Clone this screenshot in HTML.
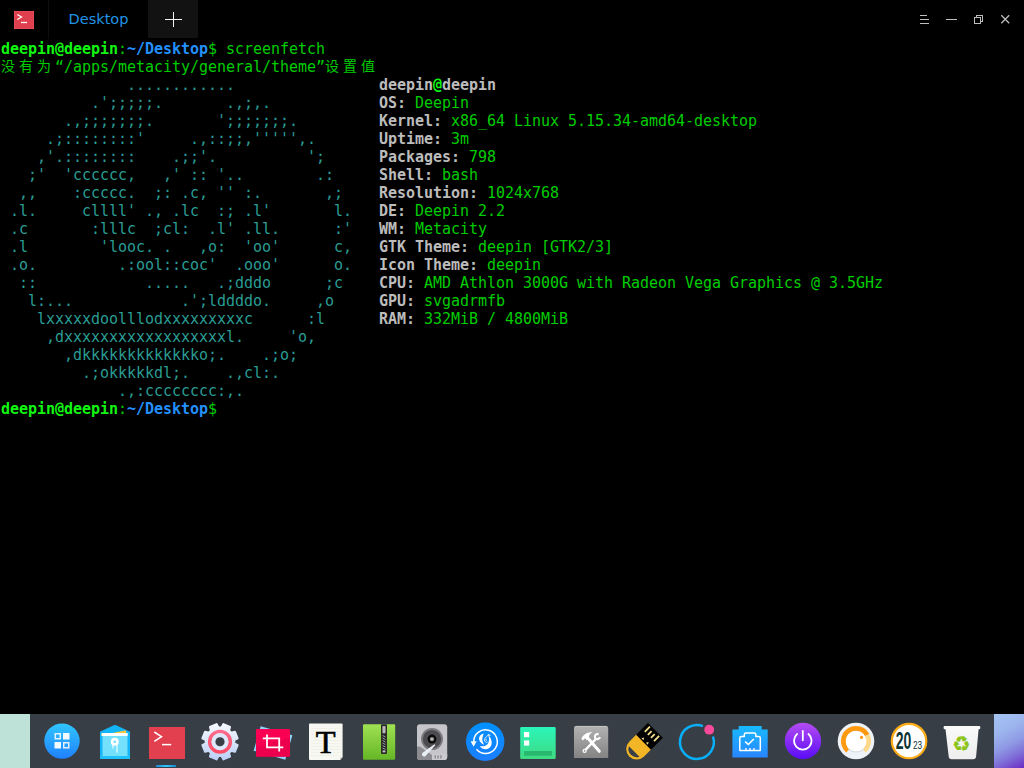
<!DOCTYPE html>
<html lang="zh-CN"><head><meta charset="utf-8"><title>Desktop - Deepin Terminal</title>
<style>
html,body{margin:0;padding:0;background:#000;}
body{width:1024px;height:768px;position:relative;overflow:hidden;font-family:"Liberation Sans","Noto Sans CJK SC",sans-serif;}
#titlebar{position:absolute;left:0;top:0;width:1024px;height:39px;background:#000;}
#tab{position:absolute;left:48px;top:0;width:99px;height:39px;color:#2094e6;font-family:"DejaVu Sans","Liberation Sans",sans-serif;font-size:14.500px;line-height:39px;text-align:center;border-left:1px solid #0e0e0e;}
#plus{position:absolute;left:148px;top:0;width:50px;height:38px;background:#121212;}
#term{position:absolute;left:1px;top:40px;width:1022px;height:675px;color:#00cd00;font-family:"DejaVu Sans Mono", "Liberation Mono", "Noto Sans CJK SC", monospace;font-size:15px;line-height:18px;letter-spacing:-0.03px;}
.ln{height:18px;white-space:pre;overflow:visible;}
.ln b{font-weight:bold;}
.ln i{font-style:normal;display:inline-block;width:18px;height:18px;vertical-align:top;text-align:center;letter-spacing:0;font-family:"Noto Sans CJK SC","WenQuanYi Zen Hei",sans-serif;font-size:14px;line-height:18px;position:relative;left:-2px;top:-2px;}
.g{color:#12f612;}
.b{color:#2490fc;}
.c{color:#2a9d94;}
.w{color:#bcbcbc;}
#dockwrap{position:absolute;left:0;top:714px;width:1024px;height:54px;}
#wl{position:absolute;left:0;top:0;width:30px;height:54px;background:#bfe2d8;}
#wr{position:absolute;left:994px;top:0;width:30px;height:54px;background:linear-gradient(152deg,#a4c4f2 0%,#9db6ee 30%,#8f9ae4 55%,#8070d8 75%,#6a2ac4 100%);}
#dock{position:absolute;left:30px;top:0;width:964px;height:54px;background:#383e45;}
</style></head><body>
<div id="titlebar">
<svg style="position:absolute;left:14px;top:11px" width="20" height="18" viewBox="0 0 20 18"><rect x="0" y="0" width="20" height="18" fill="#ef4c5c"/><rect x="0.500" y="0.500" width="19" height="17" fill="#df404e"/><path d="M3.300 3.400 L7.600 6 L3.300 8.600" fill="none" stroke="#fff" stroke-width="1.200"/><path d="M7 11.500 H13" stroke="#fff" stroke-width="1.300"/></svg>
<div id="tab">Desktop</div>
<div id="plus"><svg width="50" height="38" viewBox="0 0 50 38" shape-rendering="crispEdges"><path d="M17 19.500 H34 M25.500 12 V27" stroke="#f4f4f4" stroke-width="1" fill="none"/></svg></div>
<svg style="position:absolute;left:910px;top:8px" width="110" height="24" viewBox="0 0 110 24" fill="none" stroke="#bdbdbd" stroke-width="1">
<g shape-rendering="crispEdges"><path d="M10 7.500 H17 M10 11.500 H19 M10 15.500 H19"/>
<path d="M36 11.500 H47"/>
<path d="M64.500 9.500 H70.500 V15.500 H64.500 Z M66.500 9 V7.500 H72.500 V13.500 H71"/></g>
<path d="M91.300 7.300 L99.200 15.200 M99.200 7.300 L91.300 15.200" stroke-width="1.300"/>
</svg>
</div>
<div id="term">
<div class="ln"><b class="g">deepin@deepin</b>:<b class="b">~/Desktop</b>$ screenfetch</div>
<div class="ln"><i>没</i><i>有</i><i>为</i>“/apps/metacity/general/theme”<i>设</i><i>置</i><i>值</i></div>
<div class="ln"><span class="c">              ............                </span><b class="w">deepin</b><b class="g">@</b><b class="w">deepin</b></div>
<div class="ln"><span class="c">          .';;;;;.       .,;,.            </span><b class="w">OS:</b> Deepin</div>
<div class="ln"><span class="c">       .,;;;;;;;.       ';;;;;;;.         </span><b class="w">Kernel:</b> x86_64 Linux 5.15.34-amd64-desktop</div>
<div class="ln"><span class="c">     .;::::::::'     .,::;;,''''',.       </span><b class="w">Uptime:</b> 3m</div>
<div class="ln"><span class="c">    ,'.::::::::    .;;'.          ';      </span><b class="w">Packages:</b> 798</div>
<div class="ln"><span class="c">   ;'  'cccccc,   ,' :: '..        .:     </span><b class="w">Shell:</b> bash</div>
<div class="ln"><span class="c">  ,,    :ccccc.  ;: .c, '' :.       ,;    </span><b class="w">Resolution:</b> 1024x768</div>
<div class="ln"><span class="c"> .l.     cllll' ., .lc  :; .l'       l.   </span><b class="w">DE:</b> Deepin 2.2</div>
<div class="ln"><span class="c"> .c       :lllc  ;cl:  .l' .ll.      :'   </span><b class="w">WM:</b> Metacity</div>
<div class="ln"><span class="c"> .l        'looc. .   ,o:  'oo'      c,   </span><b class="w">GTK Theme:</b> deepin [GTK2/3]</div>
<div class="ln"><span class="c"> .o.         .:ool::coc'  .ooo'      o.   </span><b class="w">Icon Theme:</b> deepin</div>
<div class="ln"><span class="c">  ::            .....   .;dddo      ;c    </span><b class="w">CPU:</b> AMD Athlon 3000G with Radeon Vega Graphics @ 3.5GHz</div>
<div class="ln"><span class="c">   l:...            .';lddddo.     ,o     </span><b class="w">GPU:</b> svgadrmfb</div>
<div class="ln"><span class="c">    lxxxxxdoolllodxxxxxxxxxc      :l      </span><b class="w">RAM:</b> 332MiB / 4800MiB</div>
<div class="ln"><span class="c">     ,dxxxxxxxxxxxxxxxxxxl.     'o,       </span></div>
<div class="ln"><span class="c">       ,dkkkkkkkkkkkkko;.    .;o;         </span></div>
<div class="ln"><span class="c">         .;okkkkkdl;.    .,cl:.           </span></div>
<div class="ln"><span class="c">             .,:cccccccc:,.               </span></div>
<div class="ln"><b class="g">deepin@deepin</b>:<b class="b">~/Desktop</b>$</div>
</div>
<div id="dockwrap"><div id="wl"></div><div id="dock">
<svg id="dk" style="position:absolute;left:0;top:0" width="964" height="54" viewBox="30 714 964 54">
<defs>
<linearGradient id="gLaunch" x1="0" y1="0" x2="0" y2="1"><stop offset="0" stop-color="#30c6ff"/><stop offset="1" stop-color="#2080ff"/></linearGradient>
<linearGradient id="gGear" x1="0" y1="0" x2="0" y2="1"><stop offset="0" stop-color="#f4f9ff"/><stop offset="1" stop-color="#bcd0f4"/></linearGradient>
<linearGradient id="gRing" x1="0" y1="0" x2="0" y2="1"><stop offset="0" stop-color="#ff6a8c"/><stop offset="1" stop-color="#ff4a64"/></linearGradient>
<linearGradient id="gZip" x1="0" y1="0" x2="0" y2="1"><stop offset="0" stop-color="#9fe152"/><stop offset="1" stop-color="#66b626"/></linearGradient>
<linearGradient id="gDesk" x1="0" y1="0" x2="0" y2="1"><stop offset="0" stop-color="#2af6ba"/><stop offset="1" stop-color="#3fda82"/></linearGradient>
<linearGradient id="gTool" x1="0" y1="0" x2="0" y2="1"><stop offset="0" stop-color="#b2b2b2"/><stop offset="1" stop-color="#848484"/></linearGradient>
<linearGradient id="gNet" x1="0" y1="0" x2="0" y2="1"><stop offset="0" stop-color="#18baff"/><stop offset="1" stop-color="#2886ff"/></linearGradient>
<linearGradient id="gPow" x1="0" y1="0" x2="0" y2="1"><stop offset="0" stop-color="#b44cf0"/><stop offset="1" stop-color="#5a0cf8"/></linearGradient>
<linearGradient id="gRec" x1="0" y1="0" x2="0" y2="1"><stop offset="0" stop-color="#0092ff"/><stop offset="1" stop-color="#1c7eff"/></linearGradient>
<linearGradient id="gTrash" x1="0" y1="0" x2="0" y2="1"><stop offset="0" stop-color="#fafafa"/><stop offset="1" stop-color="#eeeeee"/></linearGradient>
<linearGradient id="gInd" x1="0" y1="0" x2="1" y2="0"><stop offset="0" stop-color="#1c86d2"/><stop offset="0.500" stop-color="#2fc8ff"/><stop offset="1" stop-color="#1c86d2"/></linearGradient>
</defs>

<!-- launcher -->
<circle cx="62" cy="741.100" r="17.700" fill="url(#gLaunch)"/>
<rect x="55.250" y="733.750" width="5" height="5" fill="none" stroke="#fff" stroke-opacity="0.850" stroke-width="1.500"/>
<rect x="63" y="733" width="6.500" height="6.500" fill="#fff" fill-opacity="0.940"/>
<rect x="54.500" y="742" width="6.500" height="6.500" fill="#fff" fill-opacity="0.940"/>
<rect x="63.750" y="742.750" width="5" height="5" fill="none" stroke="#fff" stroke-opacity="0.850" stroke-width="1.500"/>

<!-- file manager -->
<path d="M100 731.700 L113.800 725.300 Q115 724.800 116.200 725.300 L130 731.700 V758.200 a0.800 0.800 0 0 1 -0.800 0.800 H100.800 a0.800 0.800 0 0 1 -0.800 -0.800 Z" fill="#14b4f8"/>
<rect x="100" y="755.500" width="30" height="3.500" rx="0.800" fill="#1fc2ff"/>
<path d="M110 733.400 L126 730.200 L126.200 733.400 Z" fill="#fbc93f"/>
<path d="M101.300 733.600 H103 V736 H101.600 Z" fill="#fbc93f"/>
<rect x="101.800" y="733" width="25.900" height="3" fill="#ffffff"/>
<path d="M102.500 736 H127.500 V756 H102.500 Z" fill="#74e0fc"/>
<circle cx="114.800" cy="741.700" r="2.650" fill="none" stroke="#fff" stroke-width="2.700"/>
<path d="M112.900 745 V748.600 M117 745 V752.800" stroke="#e4faff" stroke-width="1.300" fill="none"/>

<!-- terminal -->
<rect x="149" y="727" width="36" height="32" fill="#e2404e"/>
<path d="M154.300 732 L161.500 736.700 L154.300 741.400" fill="none" stroke="#fff" stroke-width="1.500"/>
<path d="M162 744.600 H171.200" stroke="#fff" stroke-width="1.500"/>
<rect x="156" y="765" width="20" height="2" fill="url(#gInd)"/>

<!-- settings gear -->
<g transform="translate(220 741.750)">
<path id="gearp" stroke-linejoin="round" stroke="url(#gGear)" stroke-width="2" d="M14.32 1.51 L17.67 3.43 L14.92 10.07 L11.19 9.06 L9.06 11.19 L10.07 14.92 L3.43 17.67 L1.51 14.32 L-1.51 14.32 L-3.43 17.67 L-10.07 14.92 L-9.06 11.19 L-11.19 9.06 L-14.92 10.07 L-17.67 3.43 L-14.32 1.51 L-14.32 -1.51 L-17.67 -3.43 L-14.92 -10.07 L-11.19 -9.06 L-9.06 -11.19 L-10.07 -14.92 L-3.43 -17.67 L-1.51 -14.32 L1.51 -14.32 L3.43 -17.67 L10.07 -14.92 L9.06 -11.19 L11.19 -9.06 L14.92 -10.07 L17.67 -3.43 L14.32 -1.51 Z" fill="url(#gGear)"/>
<circle r="10.300" fill="none" stroke="url(#gRing)" stroke-width="3.600"/>
<circle r="8.500" fill="#dde8fa"/>
<circle r="4.600" fill="#383e45"/>
</g>

<!-- screenshot -->
<g transform="rotate(16 273 743)"><rect x="256.500" y="730.200" width="33" height="25.600" fill="#8fd3fb"/></g>
<rect x="256" y="729" width="34" height="27.800" rx="1" fill="#fa0052"/>
<path d="M256 747 L290 738 V755.800 a1 1 0 0 1 -1 1 H257 a1 1 0 0 1 -1 -1 Z" fill="#e0004a" opacity="0.550"/>
<path d="M267 734.400 V747.300 H283.300 M262.800 738.300 H279.200 V751.400" fill="none" stroke="#fff" stroke-width="1.800"/>

<!-- font viewer -->
<path d="M310 723.500 H341.600 a1 1 0 0 1 1 1 V757 L340 760 H310 a1 1 0 0 1 -1 -1 V724.500 a1 1 0 0 1 1 -1 Z" fill="#f8f8f2"/>
<path d="M342.600 757 L340 760 V757 Z" fill="#d8d8d0"/>
<g stroke="#ecece3" stroke-width="0.600"><path d="M311 728.500 H341 M311 731.500 H341 M311 734.500 H341 M311 737.500 H341 M311 740.500 H341 M311 743.500 H341 M311 746.500 H341 M311 749.500 H341 M311 752.500 H341 M311 755.500 H341"/></g>
<text x="325.700" y="753" font-family="'Liberation Serif','DejaVu Serif',serif" font-size="32.500" text-anchor="middle" fill="#000" stroke="#000" stroke-width="0.600">T</text>

<!-- archive -->
<rect x="363" y="724.300" width="32.200" height="35.500" rx="1.200" fill="url(#gZip)"/>
<rect x="381" y="724.300" width="6" height="29.600" rx="1" fill="#2b2b2b"/>
<rect x="382.400" y="726" width="3.200" height="7.200" rx="1" fill="#b4b4b4"/>
<path d="M382.600 735.500 L385.400 737 M382.600 738 L385.400 739.500 M382.600 740.500 L385.400 742 M382.600 743 L385.400 744.500 M382.600 745.500 L385.400 747 M382.600 748 L385.400 749.500" stroke="#a8a8a8" stroke-width="0.900"/>
<rect x="382.600" y="750.500" width="2.800" height="1.800" fill="#c8c8c8"/>

<!-- disk -->
<rect x="417" y="724.300" width="30.200" height="35.800" rx="3" fill="#c6c6ca"/>
<path d="M417 746.500 L420 746.500 L432 755 V760.100 H420 a3 3 0 0 1 -3 -3 Z" fill="#8d8d91"/>
<path d="M432 754 H447.200 V757.100 a3 3 0 0 1 -3 3 H432 Z" fill="#cbcbcf"/>
<path d="M435.300 755.200 V758.600 M438.100 755.200 V758.600 M440.900 755.200 V758.600" stroke="#85858a" stroke-width="1.300"/>
<circle cx="432" cy="739.100" r="11" fill="#7b7b7f"/>
<circle cx="432" cy="739.100" r="9.200" fill="#4c4c50"/>
<circle cx="432" cy="739.100" r="4.500" fill="#0a0a0a"/>
<circle cx="432" cy="739.100" r="2.200" fill="#8c8c90"/>
<rect x="430.800" y="738.600" width="2" height="0.900" fill="#f0f0f0"/>
<path d="M434.500 744.300 L422.300 753 a2.300 2.300 0 0 0 3 3.300 L435.300 745.200 Z" fill="#e9eff5"/>

<!-- recovery -->
<circle cx="485.200" cy="741.700" r="19.200" fill="url(#gRec)"/>
<path d="M473.71 742.11 A11.800 11.800 0 1 1 476.46 749.28" fill="none" stroke="#fff" stroke-width="1.500"/>
<path d="M470.600 741.300 H476.600 L473.600 746.800 Z" fill="#fff"/>
<path d="M483.800 733.600 C480 734.500 478.600 737.500 479.200 739.800 C479.800 742.200 481.800 744 484.200 744.700 C482.700 742.600 482.100 740.100 482.400 738 C482.700 736.300 483.200 734.800 483.800 733.600 Z" fill="#fff"/>
<path d="M479.800 746 C482 749.300 486.200 750.400 489.200 748.100 C491.500 746.300 492.200 743.300 491.400 740.500 C490.700 738 489.600 736.200 488.200 735.200 C489.300 737.600 489.400 740.600 488.300 742.900 C486.800 745.900 483.200 747 479.800 746 Z" fill="#fff"/>
<path d="M486.600 735.800 L488.700 734 L491.100 735.600 Z" fill="#fff"/>
<path d="M487.300 736.400 C484.800 737.300 483.900 739.600 484.900 741.300 C485.700 742.700 487.300 742.800 487.900 741.600 M486.200 738.800 C485.600 739.700 486.200 740.700 487 740.400" fill="none" stroke="#fff" stroke-width="0.900" opacity="0.900"/>

<!-- show desktop -->
<rect x="520.200" y="727" width="35.500" height="32" rx="1.200" fill="url(#gDesk)"/>
<rect x="524" y="732" width="5.200" height="5.200" fill="#fff"/>
<rect x="524" y="740.400" width="5.200" height="5.200" fill="#fff"/>
<rect x="524" y="751" width="28" height="4.800" fill="#29b870"/>

<!-- tools -->
<path d="M574 727.900 a2 2 0 0 1 2 -2 H606.200 a2 2 0 0 1 2 2 V757.900 H574 Z" fill="url(#gTool)"/>
<path d="M575.500 726.400 H606.700" stroke="#c4c4c4" stroke-width="1" fill="none"/>
<path d="M585.600 749.800 L595.700 739.100" stroke="#fff" stroke-width="2.400" fill="none"/>
<path d="M599.860 737.030 A2.500 2.500 0 1 1 598.610 734.410" stroke="#fff" stroke-width="2.100" fill="none"/>
<circle cx="584.600" cy="750.900" r="1.500" fill="#909090" stroke="#fff" stroke-width="1.300"/>
<path d="M587.800 738 L599.300 751.300" stroke="#fff" stroke-width="3" stroke-linecap="round" fill="none"/>
<path d="M581.300 738.700 C582.500 735.600 585.500 733 589 732.400 L592.600 732 C590.600 733.200 589.400 734.600 589 736.200 L588.900 738.200 L586.600 740 L585 738.200 L583 740.400 Z" fill="#fff"/>

<!-- usb creator -->
<g transform="translate(655.400 730.350) rotate(45)">
<path d="M-10.500 16 V26.500 a10.500 10.500 0 0 0 21 0 V16 Z" fill="#f2b526"/>
<rect x="-10.500" y="0" width="21" height="16.800" fill="#000"/>
<path d="M-6.500 1.300 V8.500 M-2.200 3.200 V8.500 M2.200 3.200 V8.500 M6.600 1.300 V8.500" stroke="#f3e18e" stroke-width="1.800"/>
<path d="M-4.300 15.400 L-2.900 13 L-1.500 15.400 Z M2 15.400 L3.400 13 L4.800 15.400 Z" fill="#f3e18e"/>
<path d="M-7.400 30 H7.400 A8.200 8.200 0 0 1 -7.400 30 Z" fill="#383e45"/>
</g>

<!-- system monitor ring -->
<path d="M712.93 736.48 A16.950 16.950 0 1 1 702.92 726.15" fill="none" stroke="#08b0fc" stroke-width="2.500"/>
<circle cx="709.200" cy="729.700" r="4.900" fill="#f84a9a"/>

<!-- network -->
<path d="M732.400 729.500 H738.700 V726 H761.700 V729.500 H767.700 V757.400 H732.400 Z" fill="url(#gNet)"/>
<path d="M739.800 750.600 V738 a1.500 1.500 0 0 1 1.500 -1.500 H744.300 V734.600 a1.500 1.500 0 0 1 1.500 -1.500 H754.300 a1.500 1.500 0 0 1 1.500 1.500 V736.500 H758.800 a1.500 1.500 0 0 1 1.500 1.500 V750.600 Z" fill="none" stroke="#fff" stroke-width="1.500" stroke-linejoin="round"/>
<path d="M745.200 741.600 L748.300 744.500 L753.800 739" fill="none" stroke="#fff" stroke-width="1.600"/>
<path d="M746 750.300 V748 M750 750.300 V748 M754 750.300 V748" stroke="#fff" stroke-width="1.300"/>

<!-- power -->
<circle cx="803" cy="741" r="18.200" fill="url(#gPow)"/>
<path d="M797.140 734.060 A8.800 8.800 0 1 0 808.460 734.060" fill="none" stroke="#fff" stroke-width="1.800" stroke-linecap="round"/>
<path d="M802.800 730.800 V740.300" stroke="#fff" stroke-width="1.800" stroke-linecap="round"/>

<!-- volume -->
<circle cx="856" cy="741" r="18.300" fill="#eef2f6"/>
<path d="M847.90 750.65 A12.600 12.600 0 1 1 867.13 735.08" fill="none" stroke="#ff9a10" stroke-width="4.900"/>
<path d="M867.13 735.08 A12.600 12.600 0 0 1 864.10 750.65" fill="none" stroke="#ffd98a" stroke-width="4.900"/>
<ellipse cx="856" cy="743.300" rx="9.600" ry="9.300" fill="#d5dade"/>
<circle cx="856.100" cy="741.200" r="10.300" fill="#ffffff"/>
<circle cx="861.500" cy="737.400" r="1.600" fill="#ff9a10"/>

<!-- calendar / clock -->
<circle cx="909.050" cy="741.050" r="17.200" fill="#fff" stroke="#fcac18" stroke-width="2.200"/>
<text x="895.700" y="749.400" font-weight="bold" font-family="'Liberation Sans','DejaVu Sans',sans-serif" font-size="23.200" textLength="15.600" lengthAdjust="spacingAndGlyphs" fill="#0e3434">20</text>
<text x="913" y="749.100" font-family="'Liberation Sans','DejaVu Sans',sans-serif" font-size="11.800" textLength="9.200" lengthAdjust="spacingAndGlyphs" fill="#0e3434">23</text>

<!-- trash -->
<path d="M943.600 727.200 a1.200 1.200 0 0 1 1.200 -1.200 H979.100 a1.200 1.200 0 0 1 1.200 1.200 V728 a1.200 1.200 0 0 1 -1.200 1.200 H978.600 L976.100 756.500 a3 3 0 0 1 -3 2.700 H951.700 a3 3 0 0 1 -3 -2.700 L945.500 729.200 H944.800 a1.200 1.200 0 0 1 -1.200 -1.200 Z" fill="url(#gTrash)"/>
<text x="961.500" y="751.300" text-anchor="middle" font-family="'DejaVu Sans',sans-serif" font-size="20.500" fill="#8cc416" stroke="#8cc416" stroke-width="0.300">&#x267B;&#xFE0E;</text>
</svg>

</div><div id="wr"></div></div>
</body></html>
